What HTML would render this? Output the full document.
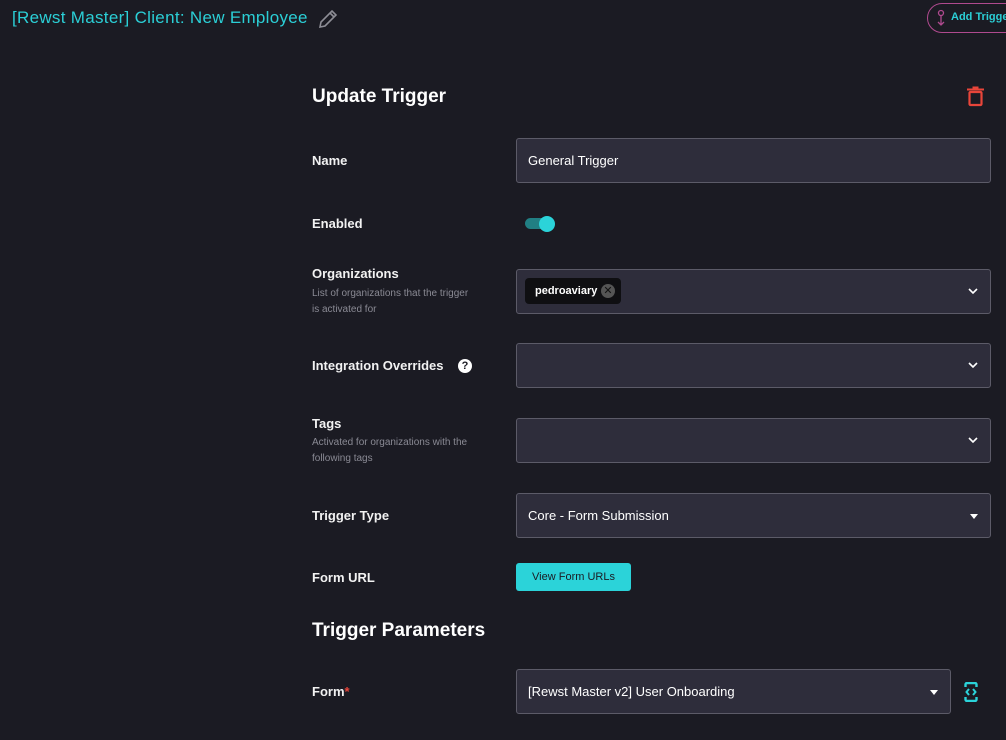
<!DOCTYPE html>
<html><head><style>
body{margin:0;width:1006px;height:740px;background:#1b1b23;font-family:"Liberation Sans",sans-serif;position:relative;overflow:hidden;color:#fff}
.a{position:absolute;white-space:nowrap}
.lbl{position:absolute;left:312px;font-size:13px;font-weight:bold;color:#f2f2f2}
.sub{position:absolute;left:312px;font-size:10px;color:#8a8a94;line-height:16px}
.in{position:absolute;left:516px;width:475px;background:#2e2d3b;border:1px solid #5c5b68;border-radius:3px;box-sizing:border-box}
.chev{position:absolute;right:12px;top:50%;margin-top:-4px}
</style></head><body>
<div class="a" style="left:12px;top:8px;font-size:17px;letter-spacing:0.3px;color:#2bcfd6">[Rewst Master] Client: New Employee</div>
<svg class="a" style="left:317px;top:8px" width="22" height="22" viewBox="0 0 22 22"><path d="M3 19l1-5L15 3l4 4L8 18z M13 5l4 4" fill="none" stroke="#8e8e96" stroke-width="1.6"/></svg>
<div class="a" style="left:927px;top:3px;width:100px;height:30px;border:1px solid #b04a8f;border-radius:15px;box-sizing:border-box"></div>
<svg class="a" style="left:936px;top:9px" width="10" height="18"><circle cx="5" cy="4" r="2.5" fill="none" stroke="#b04a8f" stroke-width="1.3"/><path d="M5 6.5v9M2 13l3 3 3-3" fill="none" stroke="#b04a8f" stroke-width="1.3"/></svg>
<div class="a" style="left:951px;top:11px;font-size:11px;font-weight:bold;color:#2bcfd6">Add Trigger</div>
<div class="a" style="left:312px;top:86px;font-size:19px;font-weight:bold">Update Trigger</div>
<svg class="a" style="left:966px;top:86px" width="19" height="21"><path d="M1 3.5h17M6.5 1.5h6" stroke="#e8453a" stroke-width="2"/><rect x="3.5" y="6" width="12" height="13" rx="1" fill="none" stroke="#e8453a" stroke-width="2.2"/></svg>
<div class="lbl" style="top:153px">Name</div>
<div class="in" style="top:138px;height:45px"><span class="a" style="left:11px;top:14px;font-size:13px">General Trigger</span></div>
<div class="lbl" style="top:216px">Enabled</div>
<div class="a" style="left:525px;top:218px;width:26px;height:11px;border-radius:6px;background:#217f83"></div>
<div class="a" style="left:539px;top:216px;width:16px;height:16px;border-radius:50%;background:#2bd3d9"></div>
<div class="lbl" style="top:266px">Organizations</div>
<div class="sub" style="top:286px">List of organizations that the trigger<br>is activated for</div>
<div class="in" style="top:269px;height:45px"><div class="a" style="left:8px;top:8px;width:96px;height:26px;background:#0f0f12;border-radius:4px"><span class="a" style="left:10px;top:7px;font-size:11px;font-weight:bold">pedroaviary</span><span class="a" style="left:76px;top:6px;width:14px;height:14px;border-radius:50%;background:#555;color:#111;font-size:11px;line-height:14px;text-align:center">✕</span></div>
<svg class="chev" width="10" height="7"><path d="M1 1l4 4 4-4" fill="none" stroke="#fff" stroke-width="1.6"/></svg></div>
<div class="lbl" style="top:358px">Integration Overrides</div>
<div class="a" style="left:458px;top:359px;width:14px;height:14px;border-radius:50%;background:#fff;color:#1b1b23;font-size:11px;font-weight:bold;text-align:center;line-height:14px">?</div>
<div class="in" style="top:343px;height:45px"><svg class="chev" width="10" height="7"><path d="M1 1l4 4 4-4" fill="none" stroke="#fff" stroke-width="1.6"/></svg></div>
<div class="lbl" style="top:416px">Tags</div>
<div class="sub" style="top:435px">Activated for organizations with the<br>following tags</div>
<div class="in" style="top:418px;height:45px"><svg class="chev" width="10" height="7"><path d="M1 1l4 4 4-4" fill="none" stroke="#fff" stroke-width="1.6"/></svg></div>
<div class="lbl" style="top:508px">Trigger Type</div>
<div class="in" style="top:493px;height:45px"><span class="a" style="left:11px;top:14px;font-size:13px">Core - Form Submission</span><svg class="chev" style="margin-top:-2px" width="8" height="5"><path d="M0 0h8L4 5z" fill="#fff"/></svg></div>
<div class="lbl" style="top:570px">Form URL</div>
<div class="a" style="left:516px;top:563px;width:115px;height:28px;background:#2bd3d9;border-radius:3px;color:#1b1b23;font-size:11px;text-align:center;line-height:28px">View Form URLs</div>
<div class="a" style="left:312px;top:620px;font-size:19px;font-weight:bold">Trigger Parameters</div>
<div class="lbl" style="top:684px">Form<span style="color:#e8453a">*</span></div>
<div class="in" style="top:669px;height:45px;width:435px"><span class="a" style="left:11px;top:14px;font-size:13px">[Rewst Master v2] User Onboarding</span><svg class="chev" style="margin-top:-2px" width="8" height="5"><path d="M0 0h8L4 5z" fill="#fff"/></svg></div>
<svg class="a" style="left:964px;top:682px" width="14" height="20"><path d="M1.5 5V2.5a1.5 1.5 0 0 1 1.5-1.5h8a1.5 1.5 0 0 1 1.5 1.5V5M1.5 15v2.5A1.5 1.5 0 0 0 3 19h8a1.5 1.5 0 0 0 1.5-1.5V15" fill="none" stroke="#2bd3d9" stroke-width="2.4"/><path d="M5 7l-2.5 3L5 13M9 7l2.5 3L9 13" fill="none" stroke="#2bd3d9" stroke-width="2"/></svg>
</body></html>
